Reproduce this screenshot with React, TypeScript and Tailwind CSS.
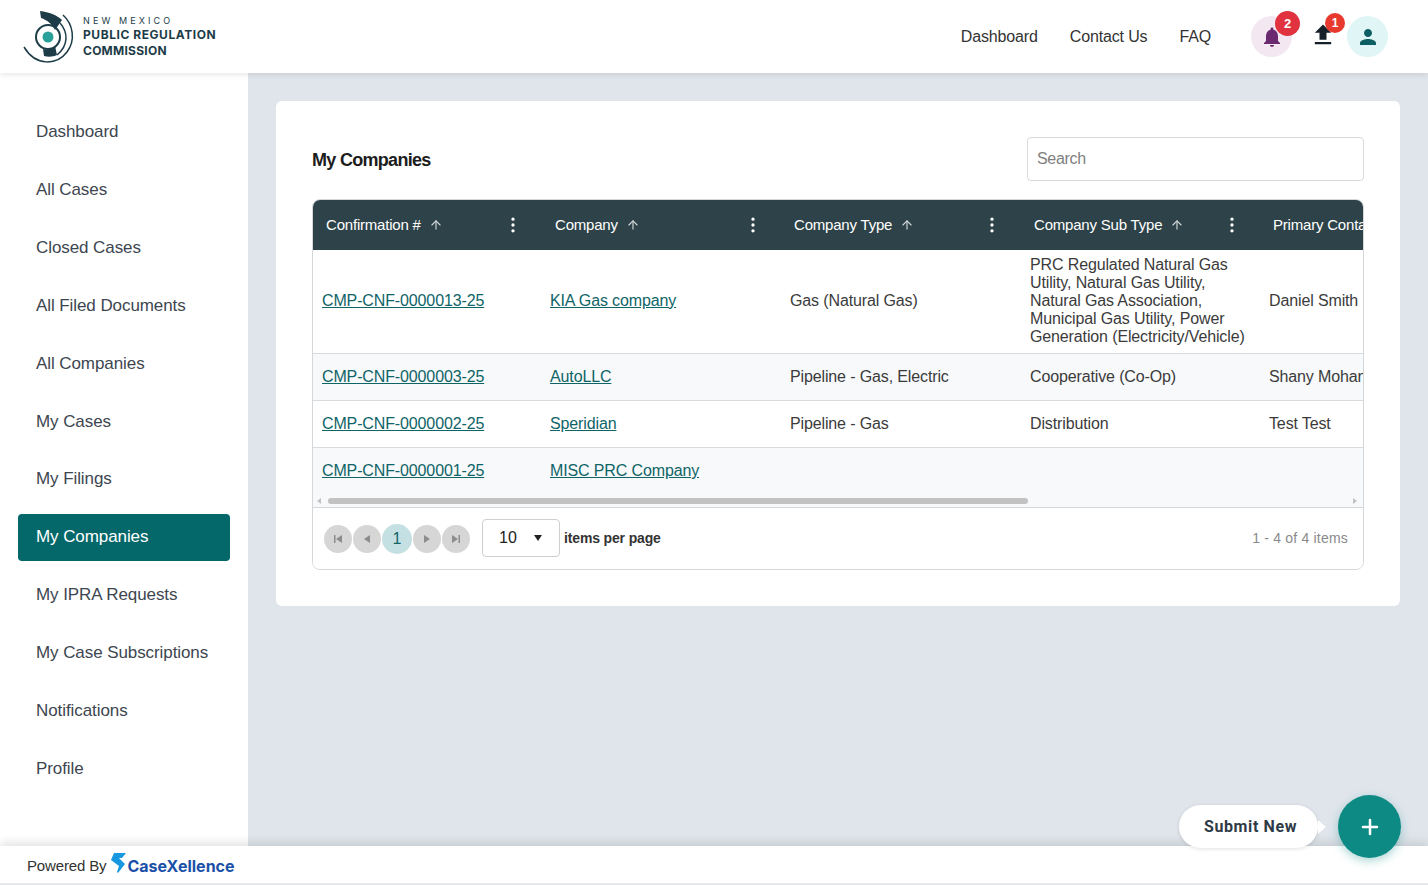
import { ArrowUp, EllipsisVertical, Plus } from 'lucide-react';

const NAV_ITEMS = [
  'Dashboard',
  'All Cases',
  'Closed Cases',
  'All Filed Documents',
  'All Companies',
  'My Cases',
  'My Filings',
  'My Companies',
  'My IPRA Requests',
  'My Case Subscriptions',
  'Notifications',
  'Profile',
];

const COLUMNS = [
  { label: 'Confirmation #', width: 'w-[228px] min-w-[228px] pl-[13px]', menu: 'left-[190px]' },
  { label: 'Company', width: 'w-[240px] min-w-[240px] pl-[14px]', menu: 'left-[202px]' },
  { label: 'Company Type', width: 'w-[240px] min-w-[240px] pl-[13px]', menu: 'left-[201px]' },
  { label: 'Company Sub Type', width: 'w-[239px] min-w-[239px] pl-[13px]', menu: 'left-[201px]' },
];

const ROWS = [
  {
    id: 'CMP-CNF-0000013-25',
    company: 'KIA Gas company',
    type: 'Gas (Natural Gas)',
    subType: 'PRC Regulated Natural Gas Utility, Natural Gas Utility, Natural Gas Association, Municipal Gas Utility, Power Generation (Electricity/Vehicle)',
    contact: 'Daniel Smith',
    height: 'h-[104px] border-b pb-[2px]',
    bg: 'bg-white',
  },
  {
    id: 'CMP-CNF-0000003-25',
    company: 'AutoLLC',
    type: 'Pipeline - Gas, Electric',
    subType: 'Cooperative (Co-Op)',
    contact: 'Shany Mohan',
    height: 'h-[47px] border-b',
    bg: 'bg-[#f7f9fa]',
  },
  {
    id: 'CMP-CNF-0000002-25',
    company: 'Speridian',
    type: 'Pipeline - Gas',
    subType: 'Distribution',
    contact: 'Test Test',
    height: 'h-[47px] border-b',
    bg: 'bg-white',
  },
  {
    id: 'CMP-CNF-0000001-25',
    company: 'MISC PRC Company',
    type: '',
    subType: '',
    contact: '',
    height: 'h-[46px]',
    bg: 'bg-[#f7f9fa]',
  },
];

function Logo() {
  return (
    <svg className="shrink-0" width="52" height="54" viewBox="0 0 52 54" fill="none">
      <path d="M17 1 C26 2 34 5 39 10 L32 20 C29 14 24 10 18 8 Z" fill="#1d3c48" />
      <path d="M40 5 C50 14 53 30 44 42 C34 55 13 57 1 37" stroke="#1d3c48" strokeWidth="1.5" />
      <path d="M37 13 C45 22 46 35 34 45" stroke="#1d3c48" strokeWidth="1.5" />
      <path d="M20 39 C25 40 29 39 32 36 L34 45 C30 47 25 47 21 46 Z" fill="#1d3c48" />
      <circle cx="25" cy="27" r="12" stroke="#1d3c48" strokeWidth="2" />
      <circle cx="25" cy="27" r="5.5" fill="#2aa198" />
    </svg>
  );
}

function Bell() {
  return (
    <svg width="24" height="24" viewBox="0 0 24 24" fill="#6b2a6f">
      <path d="M12 22c1.100 0 2-.9 2-2h-4c0 1.100.9 2 2 2zm6-6v-5c0-3.070-1.630-5.640-4.500-6.320V4c0-.83-.67-1.500-1.500-1.500s-1.500.67-1.500 1.500v.68C7.640 5.360 6 7.920 6 11v5l-2 2v1h16v-1l-2-2z" />
    </svg>
  );
}

function Upload() {
  return (
    <svg className="shrink-0" width="28" height="28" viewBox="0 0 24 24" fill="#16202a">
      <path d="M5 20h14v-2H5v2zm0-10h4v6h6v-6h4l-7-7-7 7z" />
    </svg>
  );
}

function Person() {
  return (
    <svg width="24" height="24" viewBox="0 0 24 24" fill="#0b5f62">
      <path d="M12 12c2.210 0 4-1.790 4-4s-1.790-4-4-4-4 1.790-4 4 1.790 4 4 4zm0 2c-2.670 0-8 1.340-8 4v2h16v-2c0-2.660-5.330-4-8-4z" />
    </svg>
  );
}

function PagerButton({ path }: { path: string }) {
  return (
    <div className="w-[28px] h-[28px] rounded-full bg-[#d6d6d6] flex items-center justify-center">
      <svg width="12" height="12" viewBox="0 0 12 12" fill="#8c8c8c">
        <path d={path} />
      </svg>
    </div>
  );
}

export default function App() {
  return (
    <div className="relative w-[1428px] h-[885px] overflow-hidden bg-[#e0e5ec] font-['Liberation_Sans',Arial,sans-serif] text-[#333]">
      {/* Header */}
      <header className="relative z-20 h-[73px] bg-white shadow-[0_1px_6px_rgba(0,0,0,0.12)] flex items-center pl-[23px] pr-[40px]">
        <Logo />
        <div className="ml-[8px] flex flex-col font-['Inter',sans-serif] text-[#1d3c48]">
          <span className="text-[9px] leading-[12px] tracking-[3.1px] font-normal">NEW MEXICO</span>
          <span className="text-[12px] leading-[16px] font-bold tracking-[0.55px]">PUBLIC REGULATION</span>
          <span className="text-[12px] leading-[16px] font-bold tracking-[0.25px]">COMMISSION</span>
        </div>
        <nav className="ml-auto flex items-center text-[16px] text-[#333] tracking-[-0.15px]">
          <a className="mr-[32px]">Dashboard</a>
          <a className="mr-[32px]">Contact Us</a>
          <a>FAQ</a>
        </nav>
        <div className="ml-[40px] flex items-center">
          <div className="relative w-[41px] h-[41px] rounded-full bg-[#f3e8f1] flex items-center justify-center">
            <Bell />
            <span className="absolute -top-[5px] -right-[8px] w-[25px] h-[25px] rounded-full bg-[#e0323f] text-white text-[13px] font-bold flex items-center justify-center">2</span>
          </div>
          <div className="relative ml-[19px] mb-[3px] w-[24px] h-[24px] flex items-center justify-center">
            <Upload />
            <span className="absolute -top-[10px] -right-[10px] w-[20px] h-[20px] rounded-full bg-[#e8392f] text-white text-[12px] font-bold flex items-center justify-center">1</span>
          </div>
          <div className="ml-[12px] w-[41px] h-[41px] rounded-full bg-[#e0f5f5] flex items-center justify-center">
            <Person />
          </div>
        </div>
      </header>

      <div className="flex h-[773px]">
        {/* Sidebar */}
        <aside className="w-[248px] shrink-0 bg-white pt-[35.4px] px-[18px] flex flex-col gap-[10.9px]">
          {NAV_ITEMS.map((item) => (
            <a
              key={item}
              className={`h-[47px] shrink-0 pl-[18px] rounded-[4px] flex items-center text-[17px] tracking-[-0.08px] ${
                item === 'My Companies' ? 'bg-[#04686a] text-white' : 'text-[#3d4650]'
              }`}
            >
              {item}
            </a>
          ))}
        </aside>

        {/* Main */}
        <main className="flex-1 min-w-0 pt-[28px] px-[28px]">
          <div className="h-[505px] bg-white rounded-[6px] pt-[36px] px-[36px]">
            <div className="flex items-center justify-between h-[44px]">
              <h1 className="pt-[2px] text-[18px] font-bold text-[#1c1c1c] tracking-[-0.7px]">My Companies</h1>
              <input
                placeholder="Search"
                className="w-[337px] h-[44px] px-[9px] pb-[1px] border border-[#dadada] rounded-[4px] text-[16px] tracking-[-0.3px] placeholder:text-[#808080]"
              />
            </div>

            <div className="mt-[18px] border border-[#d5d8db] rounded-[8px] overflow-hidden">
              <div className="overflow-hidden">
                {/* Table header */}
                <div className="flex h-[50px] bg-[#2e4349] text-white text-[15px] tracking-[-0.2px]">
                  {COLUMNS.map((col) => (
                    <div key={col.label} className={`relative ${col.width} flex items-center`}>
                      <span>{col.label}</span>
                      <ArrowUp className="ml-[8px] w-[14px] h-[14px] text-[#d0d6d8]" />
                      <EllipsisVertical className={`absolute ${col.menu} w-[20px] h-[20px]`} />
                    </div>
                  ))}
                  <div className="pl-[13px] flex items-center whitespace-nowrap">Primary Contact</div>
                </div>

                {/* Table rows */}
                {ROWS.map((row) => (
                  <div key={row.id} className={`flex items-center border-[#d9dcdf] text-[16px] leading-[18px] tracking-[-0.13px] text-[#3b3b3b] ${row.height} ${row.bg}`}>
                    <div className="w-[228px] min-w-[228px] pl-[9px]">
                      <a className="underline text-[#0f6468]">{row.id}</a>
                    </div>
                    <div className="w-[240px] min-w-[240px] pl-[9px]">
                      <a className="underline text-[#0f6468]">{row.company}</a>
                    </div>
                    <div className="w-[240px] min-w-[240px] pl-[9px]">{row.type}</div>
                    <div className="w-[239px] min-w-[239px] pl-[9px] pr-[8px]">{row.subType}</div>
                    <div className="pl-[9px] whitespace-nowrap">{row.contact}</div>
                  </div>
                ))}

                {/* Horizontal scrollbar */}
                <div className="h-[13px] bg-[#f7f9fa] flex items-center pl-[15px] relative">
                  <div className="w-[700px] h-[6px] rounded-full bg-[#c2c2c2]" />
                  <span className="absolute left-[4px] w-0 h-0 border-y-[3px] border-y-transparent border-r-[4px] border-r-[#c2c2c2]" />
                  <span className="absolute right-[6px] w-0 h-0 border-y-[3px] border-y-transparent border-l-[4px] border-l-[#c2c2c2]" />
                </div>
              </div>

              {/* Pager */}
              <div className="h-[62px] border-t border-[#d5d8db] bg-white flex items-center pl-[11px] pr-[15px]">
                <div className="flex items-center gap-[1px]">
                  <PagerButton path="M2 2h1.500v8H2zM10 2v8L4 6z" />
                  <PagerButton path="M9 2v8L3 6z" />
                  <div className="w-[30px] h-[30px] rounded-full bg-[#c5e0e2] text-[#0f6468] text-[16px] flex items-center justify-center">1</div>
                  <PagerButton path="M3 2v8l6-4z" />
                  <PagerButton path="M2 2v8l6-4zM8.500 2H10v8H8.500z" />
                </div>
                <div className="ml-[12px] mb-[1px] w-[78px] h-[38px] border border-[#cfcfcf] rounded-[4px] flex items-center pl-[16px] text-[16px] text-[#222]">
                  10
                  <span className="ml-[17px] w-0 h-0 border-x-[4.500px] border-x-transparent border-t-[6px] border-t-[#222]" />
                </div>
                <span className="ml-[4px] text-[14px] font-bold tracking-[-0.15px] text-[#333]">items per page</span>
                <span className="ml-auto text-[14px] tracking-[0.2px] text-[#8a8a8a]">1 - 4 of 4 items</span>
              </div>
            </div>
          </div>
        </main>
      </div>

      {/* Footer */}
      <footer className="absolute left-0 bottom-[2px] w-full h-[37px] bg-white shadow-[0_-3px_10px_rgba(0,0,0,0.12)] flex items-center pl-[27px] pt-[3px]">
        <span className="text-[15px] tracking-[-0.15px] text-[#333]">Powered By</span>
        <svg className="ml-[5px] mb-[6px]" width="15" height="20" viewBox="0 0 15 20" fill="#1798e0">
          <path d="M3 0h12l-4 5H8l6 6-7 9-1-1 2-6-8-6z" />
        </svg>
        <span className="ml-[1px] font-['Inter',sans-serif] text-[16px] font-bold text-[#1a50a8]">CaseXellence</span>
      </footer>
      <div className="absolute left-0 bottom-0 w-full h-[2px] bg-[#e6e9ee]" />

      {/* Submit new */}
      <div className="absolute left-[1179px] top-[805px] z-30 h-[43px] w-[139px] pl-[4px] rounded-full bg-white shadow-[0_1px_4px_rgba(0,0,0,0.12)] flex items-center justify-center font-['Roboto',sans-serif] text-[16px] font-bold tracking-[0.6px] text-[#2e3a46]">
        Submit New
        <span className="absolute -right-[8px] top-[15px] w-0 h-0 border-y-[7px] border-y-transparent border-l-[8px] border-l-white" />
      </div>
      <div className="absolute left-[1338px] top-[795px] z-30 w-[63px] h-[63px] rounded-full bg-[#0e8a84] shadow-[0_3px_10px_rgba(14,138,132,0.35)] flex items-center justify-center text-white">
        <Plus className="w-[24px] h-[24px]" strokeWidth={2.5} />
      </div>
    </div>
  );
}
